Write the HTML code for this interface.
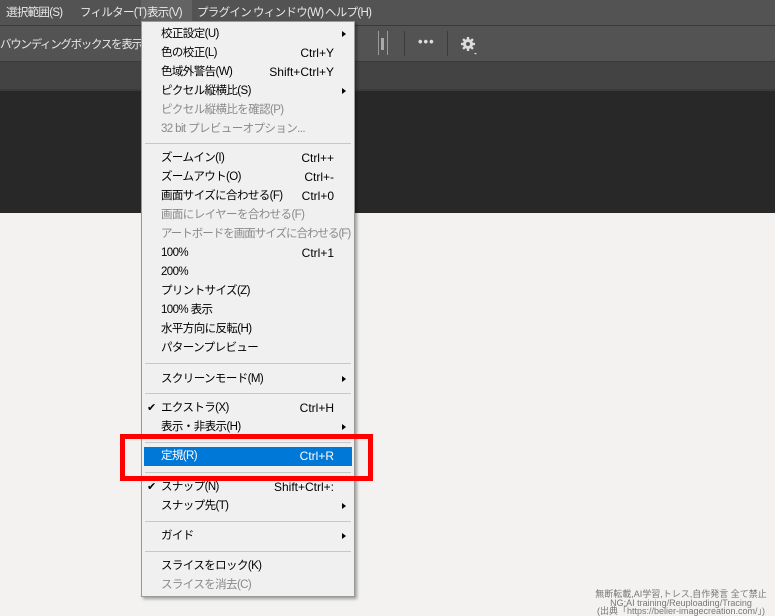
<!DOCTYPE html>
<html><head><meta charset="utf-8"><style>
*{margin:0;padding:0;box-sizing:border-box}
body{width:775px;height:616px;overflow:hidden;position:relative;background:#f0f0f0;font-family:"Liberation Sans","Noto Sans CJK JP",sans-serif;font-size:12px}
.bar{position:absolute;left:0;width:775px}
.mb span{position:absolute;top:4px;color:#e8e8e8;font-size:11.5px;letter-spacing:-0.7px;white-space:nowrap}
.menu{position:absolute;left:141px;top:21px;width:214px;height:576px;background:#f0f0f0;border:1px solid #999;box-shadow:2px 2px 3px rgba(0,0,0,.35)}
.it{position:absolute;left:19px;width:190px;height:19px;line-height:19px;color:#000;white-space:nowrap;font-size:11.5px;letter-spacing:-0.6px}
.it .k{position:absolute;right:17px;top:0;letter-spacing:0;font-size:12px}
.it.d{color:#8a8a8a}
.ar{position:absolute;right:5px;top:6px;width:0;height:0;border-left:4px solid #000;border-top:3.5px solid transparent;border-bottom:3.5px solid transparent}
.sep{position:absolute;left:3px;width:206px;height:1px;background:#c8c8c8}
.ck{position:absolute;left:-14px;top:0;font-size:11px}
</style></head><body>
<div class="bar" style="top:0;height:25px;background:#535353"></div>
<div style="position:absolute;left:141px;top:0;width:51px;height:21px;background:#636363"></div>
<div class="mb">
<span style="left:6px">選択範囲(S)</span>
<span style="left:80px">フィルター(T)</span>
<span style="left:147px">表示(V)</span>
<span style="left:197px">プラグイン</span>
<span style="left:253px">ウィンドウ(W)</span>
<span style="left:325px">ヘルプ(H)</span>
</div>
<div class="bar" style="top:25px;height:1px;background:#3a3a3a"></div>
<div class="bar" style="top:26px;height:35px;background:#535353"></div>
<div style="position:absolute;left:0;top:36px;color:#e8e8e8;font-size:11.5px;letter-spacing:-1.3px;white-space:nowrap">バウンディングボックスを表示</div>
<div style="position:absolute;left:378px;top:31px;width:1px;height:24px;background:#999"></div>
<div style="position:absolute;left:381px;top:38px;width:3px;height:12px;background:#aaa"></div>
<div style="position:absolute;left:387px;top:31px;width:1px;height:24px;background:#999"></div>
<div style="position:absolute;left:404px;top:31px;width:1px;height:25px;background:#3c3c3c"></div>
<div style="position:absolute;left:418px;top:34px;color:#ddd;font-size:13px;letter-spacing:1px;font-weight:bold">•••</div>
<div style="position:absolute;left:447px;top:31px;width:1px;height:25px;background:#3c3c3c"></div>
<svg style="position:absolute;left:460px;top:36px" width="20" height="20" viewBox="0 0 20 20"><g fill="#ddd"><circle cx="8" cy="8" r="5"/><rect x="6.8" y="1" width="2.4" height="14"/><rect x="1" y="6.8" width="14" height="2.4"/><rect x="6.8" y="1" width="2.4" height="14" transform="rotate(45 8 8)"/><rect x="6.8" y="1" width="2.4" height="14" transform="rotate(-45 8 8)"/></g><circle cx="8" cy="8" r="2" fill="#535353"/><path d="M14 17h3l-1.5 1.5z" fill="#ddd"/></svg>
<div class="bar" style="top:61px;height:1px;background:#3a3a3a"></div>
<div class="bar" style="top:62px;height:28px;background:#434343"></div>
<div class="bar" style="top:89px;height:2px;background:#3a3a3a"></div>
<div class="bar" style="top:91px;height:122px;background:#282828"></div>
<div class="bar" style="top:213px;height:403px;background:#f3f2f1"></div>

<div class="menu">
<div class="it" style="top:3px">校正設定(U)<i class="ar"></i></div>
<div class="it" style="top:22px">色の校正(L)<span class="k">Ctrl+Y</span></div>
<div class="it" style="top:41px">色域外警告(W)<span class="k">Shift+Ctrl+Y</span></div>
<div class="it" style="top:60px">ピクセル縦横比(S)<i class="ar"></i></div>
<div class="it d" style="top:79px">ピクセル縦横比を確認(P)</div>
<div class="it d" style="top:98px">32 bit プレビューオプション...</div>
<div class="sep" style="top:121px"></div>
<div class="it" style="top:127px">ズームイン(I)<span class="k">Ctrl++</span></div>
<div class="it" style="top:146px">ズームアウト(O)<span class="k">Ctrl+-</span></div>
<div class="it" style="top:165px">画面サイズに合わせる(F)<span class="k">Ctrl+0</span></div>
<div class="it d" style="top:184px">画面にレイヤーを合わせる(F)</div>
<div class="it d" style="top:203px;letter-spacing:-1px">アートボードを画面サイズに合わせる(F)</div>
<div class="it" style="top:222px">100%<span class="k">Ctrl+1</span></div>
<div class="it" style="top:241px">200%</div>
<div class="it" style="top:260px">プリントサイズ(Z)</div>
<div class="it" style="top:279px">100% 表示</div>
<div class="it" style="top:298px">水平方向に反転(H)</div>
<div class="it" style="top:317px">パターンプレビュー</div>
<div class="sep" style="top:341px"></div>
<div class="it" style="top:348px">スクリーンモード(M)<i class="ar"></i></div>
<div class="sep" style="top:371px"></div>
<div class="it" style="top:377px"><span class="ck">✔</span>エクストラ(X)<span class="k">Ctrl+H</span></div>
<div class="it" style="top:396px">表示・非表示(H)<i class="ar"></i></div>
<div class="sep" style="top:420px"></div>
<div style="position:absolute;left:2px;top:425px;width:208px;height:19px;background:#0078d7"></div>
<div class="it" style="top:425px;color:#fff">定規(R)<span class="k">Ctrl+R</span></div>
<div class="sep" style="top:450px"></div>
<div class="it" style="top:456px"><span class="ck">✔</span>スナップ(N)<span class="k">Shift+Ctrl+:</span></div>
<div class="it" style="top:475px">スナップ先(T)<i class="ar"></i></div>
<div class="sep" style="top:499px"></div>
<div class="it" style="top:505px">ガイド<i class="ar"></i></div>
<div class="sep" style="top:529px"></div>
<div class="it" style="top:535px">スライスをロック(K)</div>
<div class="it d" style="top:554px">スライスを消去(C)</div>
</div>
<div style="position:absolute;left:120px;top:434px;width:253px;height:47px;border:5px solid #f00"></div>
<div style="position:absolute;right:4px;top:590px;text-align:center;color:#777;font-size:9px;line-height:8.5px;width:180px;white-space:nowrap">無断転載,AI学習,トレス,自作発言 全て禁止<br>NG:AI training/Reuploading/Tracing<br>(出典「https://belier-imagecreation.com/」)</div>
</body></html>
